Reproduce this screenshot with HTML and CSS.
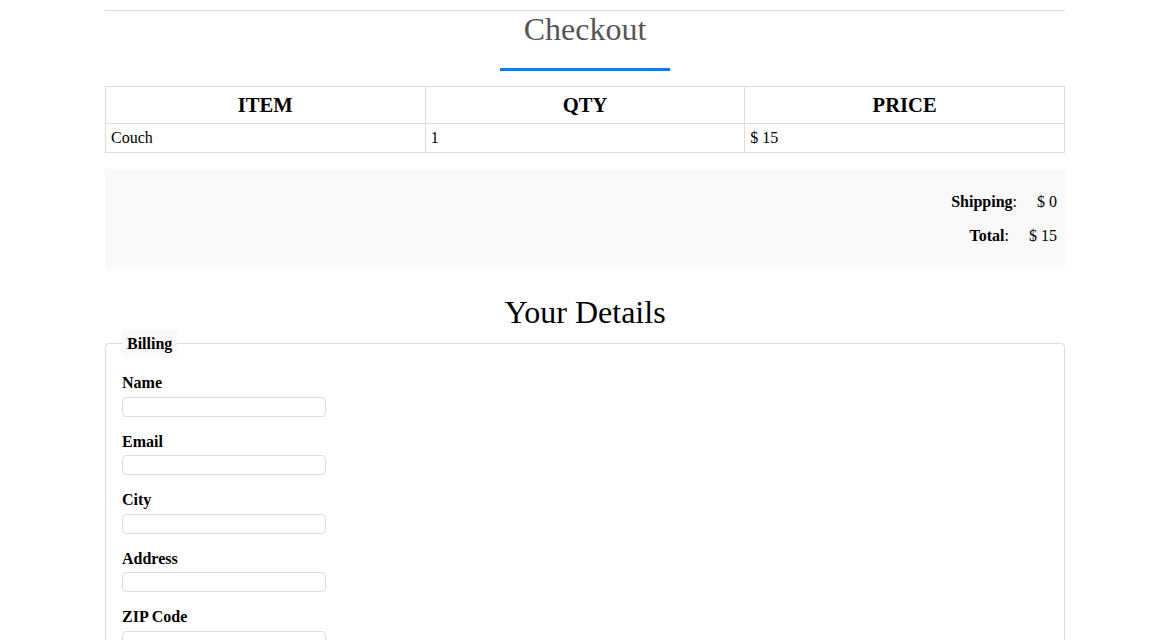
FILE: index.html
```html
<!DOCTYPE html>
<html lang="en">
<head>
<meta charset="utf-8">
<title>Checkout</title>
<link rel="stylesheet" href="styles.css">
</head>
<body>
<div class="page">
  <hr class="top-rule">
  <h1 class="title">Checkout</h1>
  <div class="title-bar"></div>

  <table class="cart">
    <thead>
      <tr><th>ITEM</th><th>QTY</th><th>PRICE</th></tr>
    </thead>
    <tbody>
      <tr><td>Couch</td><td>1</td><td>$ 15</td></tr>
    </tbody>
  </table>

  <div class="summary">
    <div class="summary-row"><span><b>Shipping</b>:</span><span>$ 0</span></div>
    <div class="summary-row"><span><b>Total</b>:</span><span>$ 15</span></div>
  </div>

  <h2 class="details-title">Your Details</h2>

  <form class="details">
    <fieldset class="billing">
      <legend>Billing</legend>
      <div class="field"><label for="name">Name</label><input id="name" type="text"></div>
      <div class="field"><label for="email">Email</label><input id="email" type="text"></div>
      <div class="field"><label for="city">City</label><input id="city" type="text"></div>
      <div class="field"><label for="address">Address</label><input id="address" type="text"></div>
      <div class="field"><label for="zip">ZIP Code</label><input id="zip" type="text"></div>
    </fieldset>
  </form>
</div>
</body>
</html>
```

FILE: styles.css
```css
html, body {
  margin: 0;
  padding: 0;
  background: #fff;
}

body {
  font-family: "Liberation Serif", "Times New Roman", serif;
  font-size: 16px;
  color: #000;
  padding-right: 2px;
}

.page {
  width: 960px;
  margin: 0 auto;
}

.top-rule {
  margin: 10px 0 0;
  border: 0;
  border-top: 1px solid #dddddd;
  height: 0;
}

.title {
  margin: 0;
  font-size: 32px;
  font-weight: normal;
  line-height: 37px;
  color: #555555;
  text-align: center;
}

.title-bar {
  width: 170px;
  height: 3px;
  background: #007bff;
  margin: 20px auto 0;
}

.cart {
  width: 100%;
  margin-top: 15px;
  border-collapse: collapse;
  table-layout: fixed;
}

.cart th,
.cart td {
  border: 1px solid #dddddd;
}

.cart th {
  font-size: 20.6px;
  font-weight: bold;
  line-height: 24px;
  padding: 6px 5px;
  text-align: center;
}

.cart td {
  font-size: 16px;
  line-height: 18px;
  padding: 5px 5px;
  text-align: left;
}

.summary {
  margin-top: 16px;
  background: #f9f9f9;
  padding: 24px 8px 24px;
  display: flex;
  flex-direction: column;
  align-items: flex-end;
  gap: 16px;
}

.summary-row {
  display: flex;
  gap: 20px;
  line-height: 18px;
}

.details-title {
  margin: 25px 0 0;
  font-size: 32px;
  font-weight: normal;
  line-height: 36px;
  text-align: center;
}

.details {
  margin: 0;
}

.billing {
  margin: 0;
  border: 1px solid #dddddd;
  border-radius: 4px;
  padding: 17px 16px 16px;
  min-width: 0;
}

.billing legend {
  background: #f9f9f9;
  font-weight: bold;
  line-height: 19px;
  padding: 4px 5px;
}

.field {
  display: flex;
  flex-direction: column;
  align-items: flex-start;
  margin-bottom: 16px;
}

.field label {
  font-weight: bold;
  line-height: 18.5px;
  margin-bottom: 4px;
}

.field input {
  box-sizing: border-box;
  width: 204px;
  height: 20px;
  border: 1px solid #dddddd;
  border-radius: 4px;
  padding: 1px 4px;
  font-family: "Liberation Serif", serif;
  font-size: 14px;
  background: #fff;
}
```
